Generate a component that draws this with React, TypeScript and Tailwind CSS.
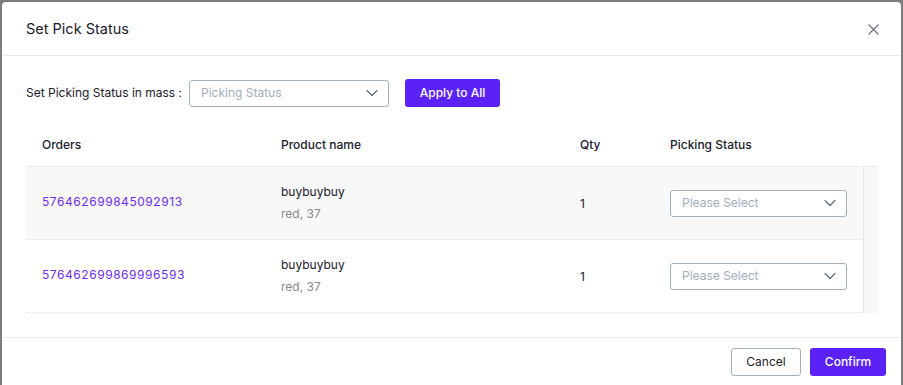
import React from "react";

const Chevron = () => (
  <svg width="12" height="8" viewBox="0 0 12 8" fill="none" className="text-[#5a6478]">
    <path d="M1 1.5L6 6.5L11 1.5" stroke="currentColor" strokeWidth="1.1" strokeLinecap="round" strokeLinejoin="round" />
  </svg>
);

const Select = ({ placeholder, w }: { placeholder: string; w: string }) => (
  <div className={`${w} h-[27px] flex items-center justify-between pl-[11px] pr-[10px] border border-[#a3b0c2] rounded-[3px] bg-white`}>
    <span className="text-[12px] text-[#a0aec0]">{placeholder}</span>
    <Chevron />
  </div>
);

const rows = [
  { id: "576462699845092913", bg: "bg-[#f8f8f8]" },
  { id: "576462699869996593", bg: "bg-white" },
];

export default function App() {
  return (
    <div className="w-[903px] h-[385px] bg-[#7d7d7d] overflow-hidden pt-[2px] pl-[2px] pr-[2px]" style={{ fontFamily: "Inter, 'Noto Sans', sans-serif" }}>
      <div className="w-[899px] h-[400px] bg-white rounded-tl-[4px] rounded-tr-[4px] flex flex-col">
        <div className="h-[54px] flex items-center justify-between pl-[24px] pr-[22px] border-b border-[#e8e8e8] pt-[1px]">
          <span className="text-[14.5px] text-[#1a202c]">Set Pick Status</span>
          <svg width="11" height="11" viewBox="0 0 11 11" className="text-[#6b7280]">
            <path d="M1 1L10 10M10 1L1 10" stroke="currentColor" strokeWidth="1.2" strokeLinecap="round" />
          </svg>
        </div>
        <div className="flex items-center pl-[24px] mt-[23px]">
          <span className="text-[12px] text-[#1a202c] mr-[7px]">Set Picking Status in mass :</span>
          <Select placeholder="Picking Status" w="w-[200px]" />
          <button className="ml-[16px] w-[95px] h-[28px] rounded-[3px] bg-[#5b22f8] text-white text-[12px] font-medium">
            Apply to All
          </button>
        </div>
        <div className="ml-[24px] w-[852px] mt-[18px]">
          <div className="flex h-[42px] items-center border-b border-[#ececec] text-[12px] font-medium text-[#1a202c] pb-[2px]">
            <div className="w-[239px] pl-[16px]">Orders</div>
            <div className="w-[299px] pl-[16px]">Product name</div>
            <div className="w-[90px] pl-[16px]">Qty</div>
            <div className="pl-[16px]">Picking Status</div>
          </div>
          <div className="flex">
            <div className="w-[837px]">
              {rows.map((r) => (
                <div key={r.id} className={`flex h-[73px] items-center border-b border-[#ececec] ${r.bg}`}>
                  <div className="w-[239px] pl-[16px] text-[12px] text-[#6a2cf6] tracking-[0.55px] pb-[3px]">{r.id}</div>
                  <div className="w-[299px] pl-[16px] flex flex-col gap-[4px] pb-[1px]">
                    <span className="text-[12px] text-[#1a202c]">buybuybuy</span>
                    <span className="text-[12px] text-[#8a8a8a]">red, 37</span>
                  </div>
                  <div className="w-[90px] pl-[16px] text-[12px] text-[#1a202c] pt-[1px]">1</div>
                  <div className="pl-[16px]">
                    <Select placeholder="Please Select" w="w-[177px]" />
                  </div>
                </div>
              ))}
            </div>
            <div className="w-[15px] h-[146px] bg-[#f8f8f8] border-l border-[#e6e6e6]" />
          </div>
        </div>
        <div className="mt-[24px] border-t border-[#ececec] flex justify-end items-center gap-[9px] pr-[15px] pt-[10px]">
          <button className="w-[70px] h-[28px] rounded-[3px] border border-[#a3b0c2] bg-white text-[12px] text-[#1a202c]">
            Cancel
          </button>
          <button className="w-[76px] h-[28px] rounded-[3px] bg-[#5b22f8] text-white text-[12px] font-medium">
            Confirm
          </button>
        </div>
      </div>
    </div>
  );
}
